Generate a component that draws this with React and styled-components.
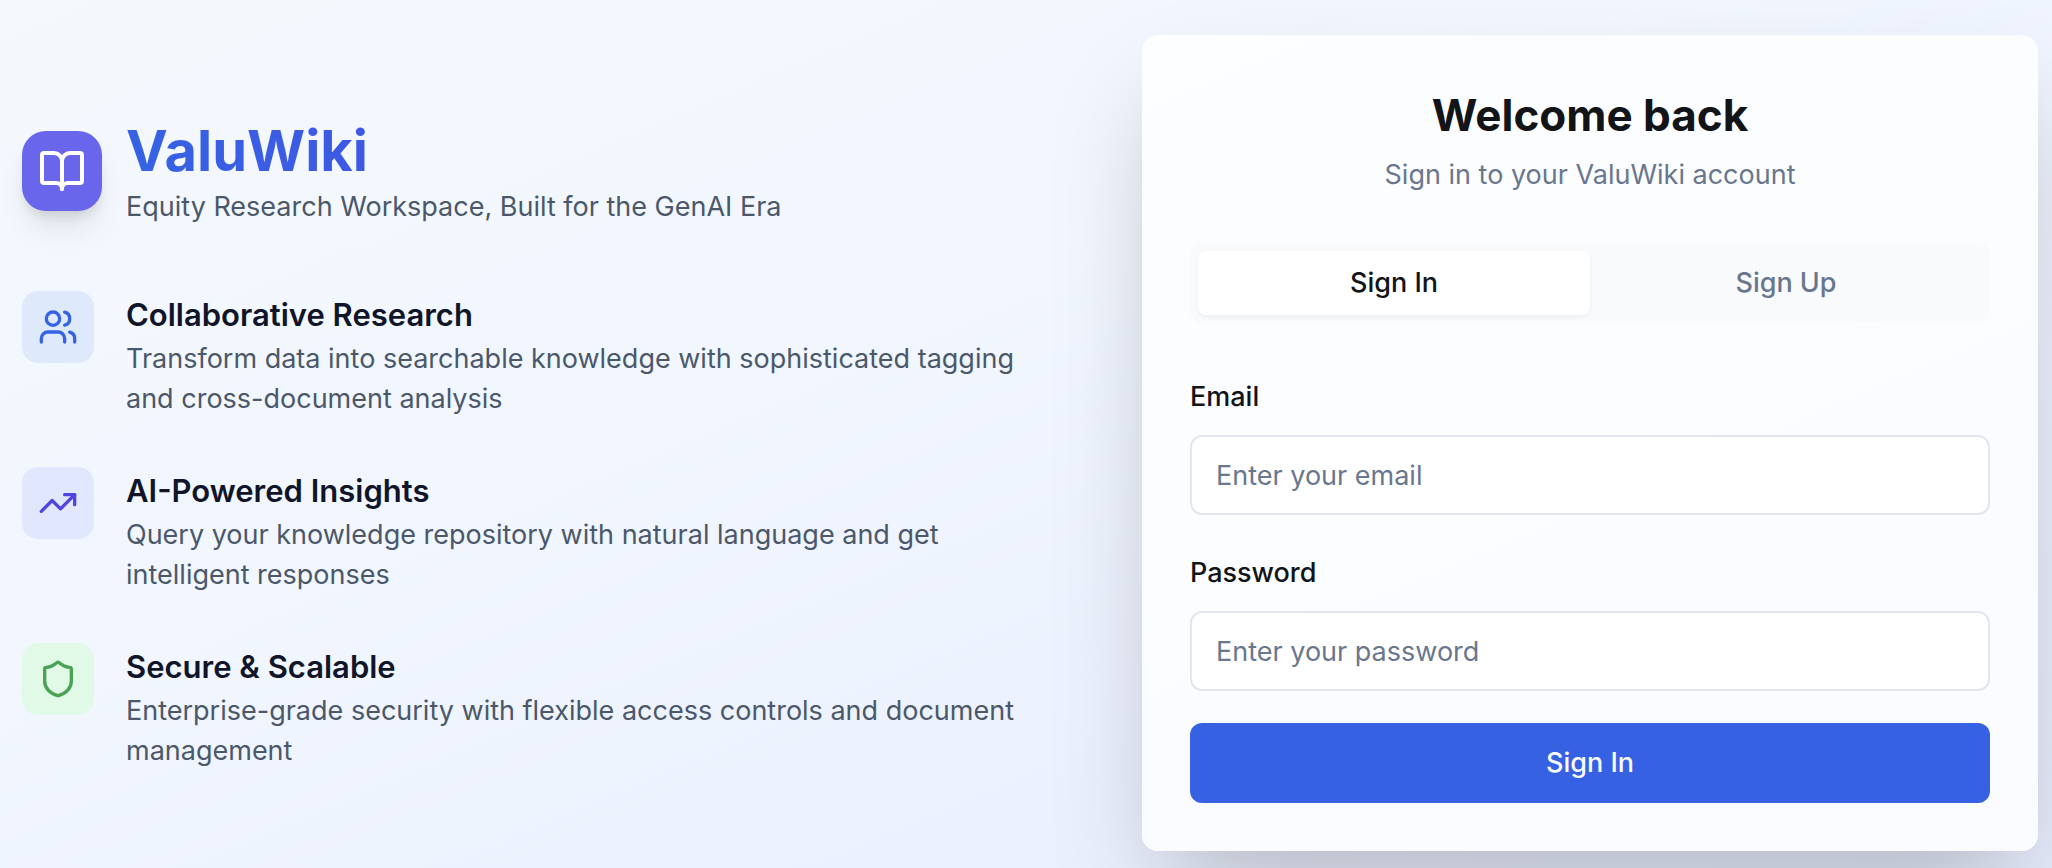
import React, { useState } from 'react';
import styled, { createGlobalStyle } from 'styled-components';
import { BookOpen, Users, TrendingUp, Shield } from 'lucide-react';

const GlobalStyle = createGlobalStyle`
  *, *::before, *::after {
    box-sizing: border-box;
  }

  body {
    margin: 0;
    font-family: Inter, 'Liberation Sans', sans-serif;
    font-size: 27px;
    line-height: 40px;
    color: #121417;
    -webkit-font-smoothing: antialiased;
  }

  h1, h2, h3, p {
    margin: 0;
  }

  button, input {
    font: inherit;
  }
`;

const Page = styled.main`
  display: grid;
  grid-template-columns: 8fr 7fr;
  column-gap: 96px;
  align-items: center;
  min-height: 100vh;
  padding: 35px 14px 17px 22px;
  overflow: hidden;
  background: linear-gradient(to bottom right, #f5f9fd, #f1f6ff 40%, #e6ecfc);
`;

const Intro = styled.section`
  display: flex;
  flex-direction: column;
  gap: 64px;
`;

const Brand = styled.header`
  display: flex;
  align-items: center;
  gap: 24px;
`;

const Logo = styled.div`
  display: flex;
  flex-shrink: 0;
  padding: 16px;
  border-radius: 24px;
  color: #fff;
  background: #6966ec;
  box-shadow: 0 20px 30px -6px rgba(0, 0, 0, 0.1), 0 8px 12px -4px rgba(0, 0, 0, 0.1);
`;

const BrandName = styled.h1`
  font-size: 56px;
  font-weight: 700;
  line-height: 72px;
  color: transparent;
  background: linear-gradient(to right, #3563e3, #4f46e5);
  background-clip: text;
`;

const Muted = styled.p`
  color: #4b586b;
`;

const FeatureList = styled.div`
  display: flex;
  flex-direction: column;
  gap: 48px;
`;

const Feature = styled.article`
  display: flex;
  align-items: flex-start;
  gap: 32px;
`;

const FeatureIcon = styled.div`
  display: flex;
  flex-shrink: 0;
  padding: 16px;
  border-radius: 16px;
  color: ${({ $color }) => $color};
  background: ${({ $tint }) => $tint};
`;

const FeatureTitle = styled.h3`
  font-size: 31px;
  font-weight: 600;
  line-height: 48px;
  color: #10152a;
`;

const Card = styled.section`
  padding: 48px;
  border-radius: 16px;
  background: rgba(255, 255, 255, 0.8);
  box-shadow: 0 50px 100px -24px rgba(0, 0, 0, 0.25);
`;

const CardHeader = styled.header`
  display: flex;
  flex-direction: column;
  gap: 8px;
  text-align: center;
`;

const CardTitle = styled.h2`
  font-size: 44px;
  font-weight: 700;
  line-height: 64px;
`;

const CardText = styled.p`
  color: #69778e;
`;

const Tabs = styled.div`
  display: grid;
  grid-template-columns: 1fr 1fr;
  margin: 48px 0;
  padding: 8px;
  border-radius: 12px;
  background: #f9fafc;
`;

const Tab = styled.button`
  height: 64px;
  padding: 0;
  border: 0;
  border-radius: 8px;
  font-weight: 500;
  cursor: pointer;
  color: ${({ $active }) => ($active ? '#121417' : '#69778e')};
  background: ${({ $active }) => ($active ? '#fff' : 'transparent')};
  box-shadow: ${({ $active }) => ($active ? '0 2px 4px rgba(0, 0, 0, 0.05)' : 'none')};
`;

const Form = styled.form`
  display: flex;
  flex-direction: column;
  gap: 32px;
`;

const Field = styled.div`
  display: flex;
  flex-direction: column;
  gap: 12px;
`;

const Label = styled.label`
  font-weight: 500;
  line-height: 52px;
`;

const Input = styled.input`
  width: 100%;
  height: 80px;
  padding: 0 24px;
  border: 2px solid #e2e6ee;
  border-radius: 12px;
  color: #121417;
  background: #fff;
  &::placeholder {
    color: #69778e;
    opacity: 1;
  }
`;

const Submit = styled.button`
  height: 80px;
  border: 0;
  border-radius: 12px;
  font-weight: 500;
  color: #f8fafc;
  background: #3761e3;
  cursor: pointer;
`;

const features = [
  {
    title: 'Collaborative Research',
    text: 'Transform data into searchable knowledge with sophisticated tagging and cross-document analysis',
    icon: Users,
    color: '#3563e3',
    tint: '#deeafb',
  },
  {
    title: 'AI-Powered Insights',
    text: 'Query your knowledge repository with natural language and get intelligent responses',
    icon: TrendingUp,
    color: '#4f46e0',
    tint: '#e1e7fd',
  },
  {
    title: 'Secure & Scalable',
    text: 'Enterprise-grade security with flexible access controls and document management',
    icon: Shield,
    color: '#4aa355',
    tint: '#e1fae8',
  },
];

function App() {
  const [tab, setTab] = useState('in');
  const action = tab === 'in' ? 'Sign In' : 'Sign Up';

  return (
    <>
      <GlobalStyle />
      <Page>
        <Intro>
          <Brand>
            <Logo><BookOpen size={48} /></Logo>
            <div>
              <BrandName>ValuWiki</BrandName>
              <Muted>Equity Research Workspace, Built for the GenAI Era</Muted>
            </div>
          </Brand>
          <FeatureList>
            {features.map(({ title, text, icon: Icon, color, tint }) => (
              <Feature key={title}>
                <FeatureIcon $color={color} $tint={tint}><Icon size={40} /></FeatureIcon>
                <div>
                  <FeatureTitle>{title}</FeatureTitle>
                  <Muted>{text}</Muted>
                </div>
              </Feature>
            ))}
          </FeatureList>
        </Intro>

        <Card>
          <CardHeader>
            <CardTitle>Welcome back</CardTitle>
            <CardText>Sign in to your ValuWiki account</CardText>
          </CardHeader>
          <Tabs role="tablist">
            <Tab type="button" role="tab" aria-selected={tab === 'in'} $active={tab === 'in'} onClick={() => setTab('in')}>
              Sign In
            </Tab>
            <Tab type="button" role="tab" aria-selected={tab === 'up'} $active={tab === 'up'} onClick={() => setTab('up')}>
              Sign Up
            </Tab>
          </Tabs>
          <Form onSubmit={(e) => e.preventDefault()}>
            <Field>
              <Label htmlFor="email">Email</Label>
              <Input id="email" type="email" placeholder="Enter your email" />
            </Field>
            <Field>
              <Label htmlFor="password">Password</Label>
              <Input id="password" type="password" placeholder="Enter your password" />
            </Field>
            <Submit type="submit">{action}</Submit>
          </Form>
        </Card>
      </Page>
    </>
  );
}

export default App;
